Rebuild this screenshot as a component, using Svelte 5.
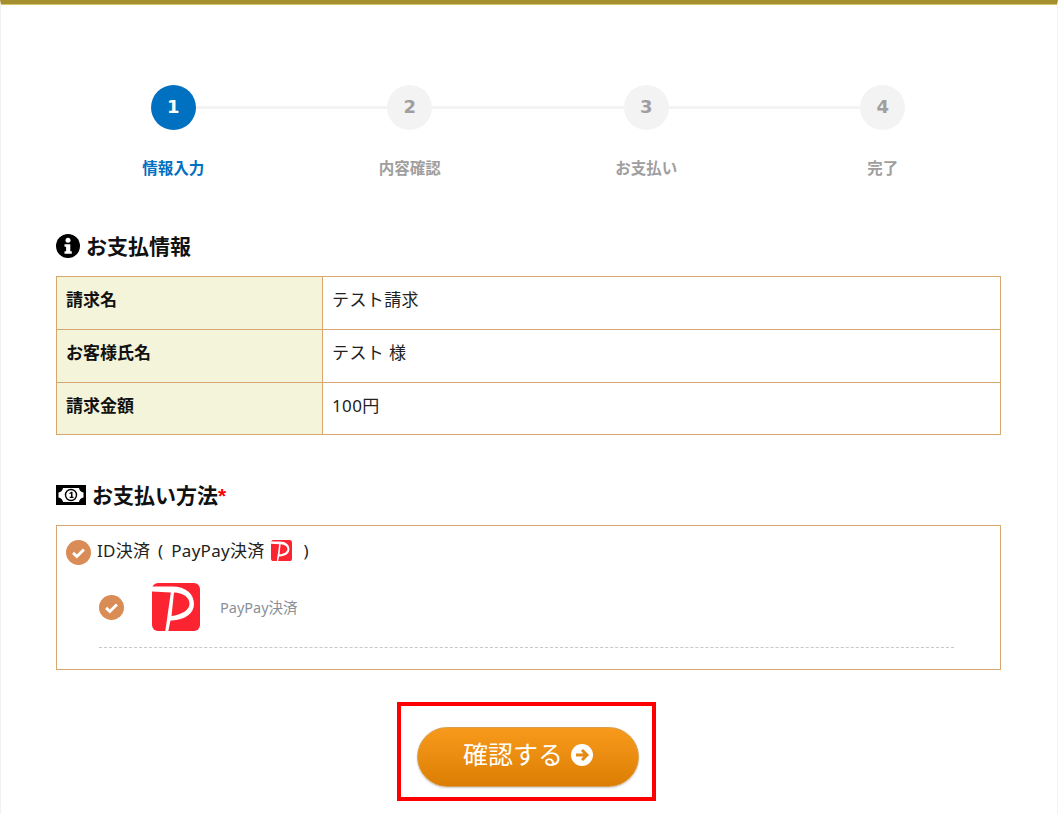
<script lang="ts">
	const steps = [
		{ num: 1, label: '情報入力', active: true },
		{ num: 2, label: '内容確認', active: false },
		{ num: 3, label: 'お支払い', active: false },
		{ num: 4, label: '完了', active: false }
	];

	const rows = [
		{ head: '請求名', value: 'テスト請求' },
		{ head: 'お客様氏名', value: 'テスト 様' },
		{ head: '請求金額', value: '100円' }
	];
</script>

{#snippet check(size: number)}
	<svg class="check" width={size} height={size} viewBox="0 0 24 24">
		<circle cx="12" cy="12" r="12" fill="#d98c55" />
		<path d="M6.800 12.400l3.600 3.500 6.800-6.800" fill="none" stroke="#fff" stroke-width="2.800" />
	</svg>
{/snippet}

{#snippet paypay(size: number)}
	<svg width={size} height={size} viewBox="0 0 48 48">
		<rect width="48" height="48" rx="6" fill="#fc2430" />
		<path
			fill-rule="evenodd"
			d="M0 3.500H20C34 3.500 42 11 42 21C42 31 32 37 20 37.500H18.500L16.300 48H13.300L18.800 9.500L0 8.500ZM22 9.500C31 10 37.500 14 37.500 21C37.500 27 29 32 19.500 33Z"
			fill="#fff"
		/>
	</svg>
{/snippet}

<div class="page">
	<ol class="steps">
		{#each steps as step}
			<li class="step" class:active={step.active}>
				<span class="num">{step.num}</span>
				<span class="label">{step.label}</span>
			</li>
		{/each}
	</ol>

	<h2 class="title first">
		<svg width="24" height="24" viewBox="0 0 24 24">
			<circle cx="12" cy="12" r="12" fill="#000" />
			<circle cx="12" cy="6.300" r="2.500" fill="#fff" />
			<path d="M8.500 10.300h5.800v7h1.500v2.500H8.500v-2.500h1.600v-4.500H8.500z" fill="#fff" />
		</svg>
		<span>お支払情報</span>
	</h2>

	<table class="info">
		<tbody>
			{#each rows as row}
				<tr>
					<th>{row.head}</th>
					<td>{row.value}</td>
				</tr>
			{/each}
		</tbody>
	</table>

	<h2 class="title second">
		<svg width="30" height="20" viewBox="0 0 30 20">
			<rect width="30" height="20" fill="#000" />
			<path d="M7 3h16c.4 2.500 2 4.100 4.500 4.500v5c-2.500.4-4.100 2-4.500 4.500H7c-.4-2.500-2-4.100-4.500-4.500v-5C5 7.100 6.600 5.500 7 3z" fill="#fff" />
			<circle cx="15" cy="10" r="5.500" fill="none" stroke="#000" stroke-width="1.400" />
			<path d="M13.400 8l2-1.200h1.100v5h1v1.100h-3.800v-1.100h1.300V8.500l-1.600.6z" fill="#000" />
		</svg>
		<span>お支払い方法<span class="req">*</span></span>
	</h2>

	<div class="method">
		<div class="method-head">
			{@render check(25)}
			<span>ID決済 ( PayPay決済</span>
			<span class="small-logo">{@render paypay(21)}</span>
			<span class="close">)</span>
		</div>
		<div class="method-item">
			{@render check(25)}
			<span class="big-logo">{@render paypay(48)}</span>
			<span class="item-name">PayPay決済</span>
		</div>
	</div>

	<div class="marked">
		<button class="confirm" type="button">
			<span class="confirm-text">確認する</span>
			<svg width="22" height="22" viewBox="0 0 24 24">
				<circle cx="12" cy="12" r="12" fill="#fff" />
				<path d="M5.500 12h11M12 6.500l5.500 5.500-5.500 5.500" fill="none" stroke="#e58a10" stroke-width="3.200" />
			</svg>
		</button>
	</div>
</div>

<style>
	:global(body) {
		background: #fff;
	}

	.page {
		box-sizing: border-box;
		width: 1058px;
		height: 814px;
		overflow: hidden;
		padding: 0 56px 0 55px;
		border-top: 4px solid #a68f2f;
		border-left: 1px solid #f1f1f1;
		border-right: 1px solid #f1f1f1;
		font-family: 'Noto Sans', 'Noto Sans CJK JP', sans-serif;
		color: #222;
		box-shadow: inset 0 1px 0 #d8c468;
	}

	.steps {
		list-style: none;
		display: grid;
		grid-template-columns: repeat(4, 1fr);
		margin: 81px 0 0 -1px;
		padding: 0;
	}

	.step {
		position: relative;
		display: flex;
		flex-direction: column;
		align-items: center;
	}

	.step:not(:last-child)::after {
		content: '';
		position: absolute;
		top: 21px;
		left: 50%;
		width: 100%;
		height: 3px;
		background: #f3f3f3;
	}

	.num {
		position: relative;
		z-index: 1;
		width: 45px;
		height: 45px;
		border-radius: 50%;
		background: #f3f3f3;
		color: #a09e9e;
		font-family: 'DejaVu Sans', sans-serif;
		font-size: 18px;
		font-weight: 700;
		line-height: 44px;
		text-align: center;
	}

	.label {
		margin-top: 27px;
		color: #a09e9e;
		font-size: 15.500px;
		font-weight: 700;
		line-height: 22px;
	}

	.active .num {
		background: #0070c0;
		color: #fff;
	}

	.active .label {
		color: #0070c0;
	}

	.title {
		display: flex;
		align-items: center;
		gap: 6px;
		margin: 0;
		color: #111;
		font-size: 21px;
		font-weight: 700;
		line-height: 30px;
	}

	.title.first {
		margin-top: 52px;
		margin-bottom: 15px;
	}

	.title.second {
		margin-top: 45px;
		margin-bottom: 15px;
	}

	.req {
		color: #f00;
		font-family: 'Liberation Sans', sans-serif;
		line-height: 0;
	}

	.info {
		width: 945px;
		border-collapse: collapse;
		table-layout: fixed;
		font-size: 17px;
	}

	.info th,
	.info td {
		height: 53px;
		padding: 0 9px 10px;
		box-sizing: border-box;
		border: 1px solid #d8a66f;
		text-align: left;
	}

	.info td {
		letter-spacing: 0.4px;
	}

	.info tr:last-child th,
	.info tr:last-child td {
		height: 52px;
		padding-bottom: 8px;
	}

	.info th {
		width: 266px;
		background: #f4f4da;
		color: #111;
		font-weight: 700;
	}

	.method {
		box-sizing: border-box;
		width: 945px;
		height: 145px;
		padding: 13px 9px 0;
		border: 1px solid #d8a66f;
		font-size: 17px;
	}

	.method-head {
		display: flex;
		align-items: center;
		height: 23px;
		padding-bottom: 2px;
		line-height: 21px;
		letter-spacing: 0.3px;
		word-spacing: 3px;
	}

	.method-head .check {
		margin: 3px 6px 0 0;
	}

	.small-logo {
		display: flex;
		margin-left: 6px;
	}

	.close {
		margin-left: 12px;
	}

	.method-item {
		display: flex;
		align-items: center;
		margin: 19px 37px 0 33px;
		padding-bottom: 16px;
		border-bottom: 1px dashed #c8c8c8;
	}

	.big-logo {
		display: flex;
		margin-left: 28px;
	}

	.item-name {
		margin: 0 0 1px 20px;
		color: #8a8f98;
		font-size: 14.500px;
	}

	.marked {
		box-sizing: border-box;
		width: 259px;
		height: 99px;
		margin: 32px 0 0 341px;
		padding: 21px 0 0 16px;
		border: 4px solid #f00;
	}

	.confirm {
		display: flex;
		align-items: center;
		justify-content: center;
		gap: 8px;
		width: 222px;
		height: 60px;
		padding: 0 0 8px;
		border: 1px solid #d8a050;
		border-radius: 30px;
		background: linear-gradient(#f79a1c, #dc7e03);
		box-shadow: 0 1px 2px rgba(0, 0, 0, 0.2);
		color: #fff;
		font-family: 'Noto Sans CJK JP', serif;
		font-size: 25px;
		font-weight: 400;
	}

	.confirm svg {
		margin-top: 4px;
	}

	.confirm-text {
		line-height: 30px;
	}

	.check {
		flex: none;
	}
</style>
